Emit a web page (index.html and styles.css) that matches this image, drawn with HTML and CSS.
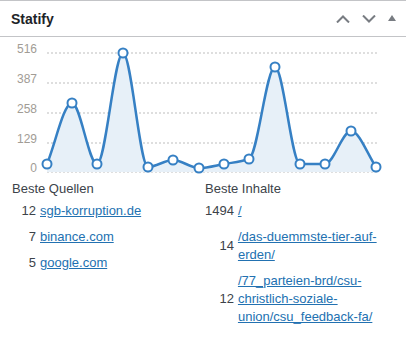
FILE: index.html
```html
<!DOCTYPE html>
<html>
<head>
  <title>Statify</title>
  <link rel="stylesheet" href="styles.css">
</head>
<body>
  <div class="postbox">
    <div class="postbox-header">
      <h2 class="hndle">Statify</h2>
      <div class="handle-actions">
        <button class="handle-btn" aria-label="Nach oben">
          <svg width="14" height="8" viewBox="0 0 14 8"><path d="M1 7.5L7 1.5L13 7.5" fill="none" stroke="#787c82" stroke-width="2"/></svg>
        </button>
        <button class="handle-btn" aria-label="Nach unten">
          <svg width="14" height="8" viewBox="0 0 14 8"><path d="M1 0.5L7 6.5L13 0.5" fill="none" stroke="#787c82" stroke-width="2"/></svg>
        </button>
        <button class="handle-btn toggle" aria-label="Umschalten">
          <svg width="8" height="6" viewBox="0 0 8 6"><path d="M0 6L4 0L8 6Z" fill="#787c82"/></svg>
        </button>
      </div>
    </div>

    <div class="inside">
      <svg class="chart" width="406" height="143" viewBox="0 37 406 143">
        <g class="grid">
          <line x1="47" y1="53" x2="377" y2="53"/>
          <line x1="47" y1="83" x2="377" y2="83"/>
          <line x1="47" y1="113" x2="377" y2="113"/>
          <line x1="47" y1="143" x2="377" y2="143"/>
          <line x1="47" y1="172" x2="377" y2="172"/>
        </g>
        <g class="labels">
          <text x="37" y="53">516</text>
          <text x="37" y="83">387</text>
          <text x="37" y="113">258</text>
          <text x="37" y="143">129</text>
          <text x="37" y="172">0</text>
        </g>
        <path class="area" d="M47 172 L47 164 C55.3 143.7 63.7 103 72 103 C80.3 103 88.7 164 97 164 C105.7 164 114.3 53 123 53 C131.3 53 139.7 167 148 167 C156.3 167 164.7 160 173 160 C181.7 160 190.3 168 199 168 C207.3 168 215.7 165.5 224 164 C232.3 162.5 240.7 162.1 249 159 C257.7 155.7 266.3 67 275 67 C283.3 67 291.7 164 300 164 C308.3 164 316.7 164 325 164 C333.7 164 342.3 131 351 131 C359.3 131 367.7 155 376 167 L376 172 Z"/>
        <path class="line" d="M47 164 C55.3 143.7 63.7 103 72 103 C80.3 103 88.7 164 97 164 C105.7 164 114.3 53 123 53 C131.3 53 139.7 167 148 167 C156.3 167 164.7 160 173 160 C181.7 160 190.3 168 199 168 C207.3 168 215.7 165.5 224 164 C232.3 162.5 240.7 162.1 249 159 C257.7 155.7 266.3 67 275 67 C283.3 67 291.7 164 300 164 C308.3 164 316.7 164 325 164 C333.7 164 342.3 131 351 131 C359.3 131 367.7 155 376 167"/>
        <g class="points">
          <circle cx="47" cy="164" r="4.5"/>
          <circle cx="72" cy="103" r="4.5"/>
          <circle cx="97" cy="164" r="4.5"/>
          <circle cx="123" cy="53" r="4.5"/>
          <circle cx="148" cy="167" r="4.5"/>
          <circle cx="173" cy="160" r="4.5"/>
          <circle cx="199" cy="168" r="4.5"/>
          <circle cx="224" cy="164" r="4.5"/>
          <circle cx="249" cy="159" r="4.5"/>
          <circle cx="275" cy="67" r="4.5"/>
          <circle cx="300" cy="164" r="4.5"/>
          <circle cx="325" cy="164" r="4.5"/>
          <circle cx="351" cy="131" r="4.5"/>
          <circle cx="376" cy="167" r="4.5"/>
        </g>
      </svg>

      <div class="tables">
        <div class="table-col">
          <div class="table-title">Beste Quellen</div>
          <div class="rows">
            <span class="num">12</span><a href="#">sgb-korruption.de</a>
            <span class="num">7</span><a href="#">binance.com</a>
            <span class="num">5</span><a href="#">google.com</a>
          </div>
        </div>
        <div class="table-col">
          <div class="table-title">Beste Inhalte</div>
          <div class="rows">
            <span class="num">1494</span><a href="#">/</a>
            <span class="num">14</span><a href="#">/das-duemmste-tier-auf-erden/</a>
            <span class="num">12</span><a href="#">/77_parteien-brd/csu-christlich-soziale-union/csu_feedback-fa/</a>
          </div>
        </div>
      </div>
    </div>
  </div>
</body>
</html>
```

FILE: styles.css
```css
body {
  margin: 0;
  background-color: #fff;
  font-family: "Segoe UI", "Liberation Sans", Arial, sans-serif;
  font-size: 13px;
  color: #3c434a;
}
.postbox {
  width: 406px;
  background-color: #fff;
  border-top: 1px solid #c3c4c7;
}
.postbox-header {
  display: flex;
  justify-content: space-between;
  align-items: center;
  height: 35px;
  border-bottom: 1px solid #c3c4c7;
}
.hndle {
  margin: 0;
  padding-left: 11px;
  font-size: 14px;
  font-weight: 600;
  color: #1d2327;
  line-height: 1;
}
.handle-actions {
  display: flex;
  align-items: center;
  padding-right: 4px;
}
.handle-btn {
  display: flex;
  align-items: center;
  justify-content: center;
  width: 26px;
  height: 35px;
  padding: 0;
  border: none;
  background: none;
  cursor: pointer;
}
.handle-btn.toggle {
  width: 20px;
  padding-bottom: 2px;
}
.chart {
  display: block;
}
.grid line {
  stroke: #d4d4d4;
  stroke-width: 1.3;
  stroke-dasharray: 2 2;
}
.labels text {
  fill: #a19c95;
  font-family: "Liberation Sans", Arial, sans-serif;
  font-size: 12px;
  text-anchor: end;
}
.area {
  fill: #e7f0f8;
}
.line {
  fill: none;
  stroke: #3680c4;
  stroke-width: 2.5;
}
.points circle {
  fill: #fff;
  stroke: #3680c4;
  stroke-width: 2;
}
.tables {
  display: grid;
  grid-template-columns: 193px 1fr;
  padding: 0 12px;
}
.table-title {
  line-height: 18px;
}
.rows {
  display: grid;
  grid-template-columns: auto 1fr;
  column-gap: 4px;
}
.rows .num,
.rows a {
  padding: 4px 0;
  line-height: 18px;
}
.rows .num {
  min-width: 24px;
  text-align: right;
  align-self: center;
}
.rows a {
  color: #2271b1;
  max-width: 155px;
}
```
